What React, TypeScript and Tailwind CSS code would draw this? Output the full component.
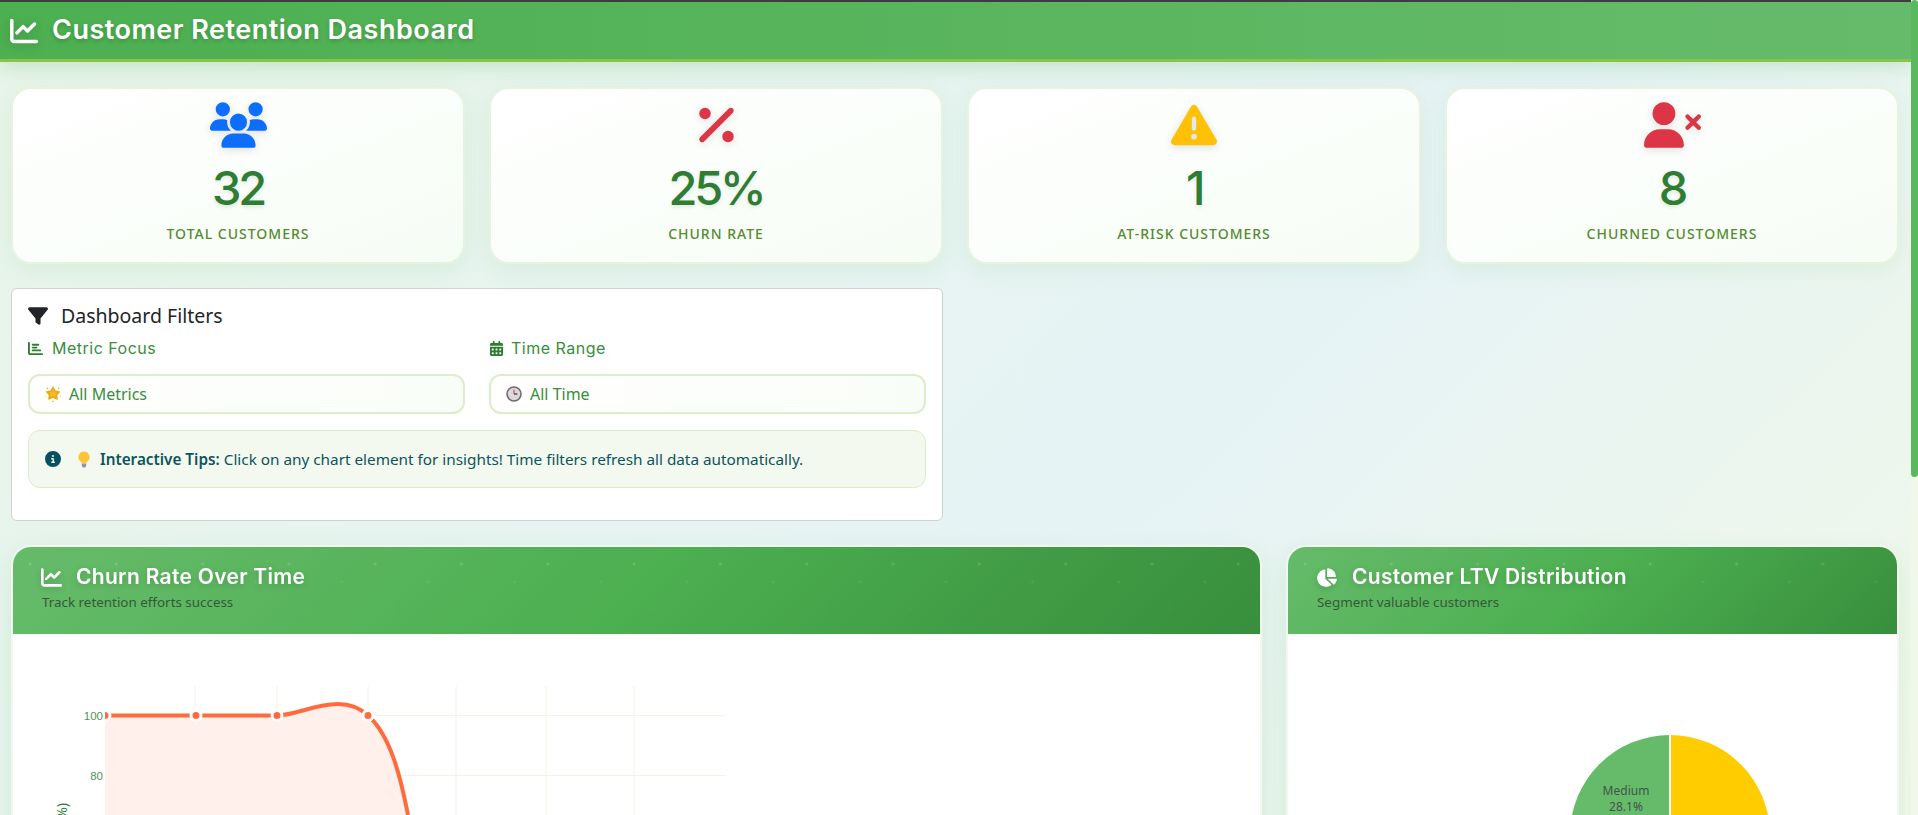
import React from "react";
import { FaChartLine, FaUsers, FaPercent, FaTriangleExclamation, FaUserXmark, FaFilter, FaChartBar, FaCalendarDays, FaCircleInfo, FaChartPie } from "react-icons/fa6";

const display = "[font-family:Inter,Lato,sans-serif]";

function Star() {
  return (
    <svg viewBox="0 0 16 16" className="w-4 h-4 shrink-0 block">
      <path d="M8 2l2.100 3.300 3.900.7-2.700 2.900.6 3.900L8 11l-3.900 1.800.6-3.900L2 6l3.900-.7z" fill="#f5bd2a" stroke="#e9a919" strokeWidth="1.800" strokeLinejoin="round" />
      <circle cx="2.400" cy="2.400" r=".8" fill="#f2b51d" /><circle cx="13.600" cy="2.400" r=".8" fill="#f2b51d" /><circle cx="8" cy=".6" r=".6" fill="#f2b51d" /><circle cx="8" cy="15.300" r=".8" fill="#f2b51d" /><circle cx=".7" cy="10" r=".6" fill="#f2b51d" /><circle cx="15.300" cy="10" r=".6" fill="#f2b51d" />
    </svg>
  );
}
function Clock() {
  return (
    <svg viewBox="0 0 16 16" className="w-4 h-4 shrink-0 block">
      <circle cx="8" cy="8" r="7" fill="#dcd8dc" stroke="#6f6a70" strokeWidth="1.600" />
      <path d="M8 8V3.600" stroke="#c8344c" strokeWidth="1" />
      <path d="M8 8h3.400" stroke="#3a3a3a" strokeWidth="1.200" />
    </svg>
  );
}
function Bulb() {
  return (
    <svg viewBox="0 0 14 17" className="w-[14px] h-[17px] shrink-0 block">
      <path d="M7 .5a5.600 5.600 0 0 0-3.300 10.100c.6.5.9 1 1 1.700h4.600c.1-.7.4-1.200 1-1.700A5.600 5.600 0 0 0 7 .5z" fill="#fcc636" />
      <path d="M4.800 12.500h4.400v2.300l-1 1.700H5.800l-1-1.700z" fill="#9c8bb5" />
    </svg>
  );
}

function Stat({ icon, value, label }: { icon: React.ReactNode; value: string; label: string }) {
  return (
    <div className="h-[177px] rounded-[20px] border-2 border-[#e5f3e0] bg-gradient-to-br from-white to-[#f6fdf5] shadow-[0_6px_22px_rgba(76,175,80,0.1)] flex flex-col items-center pt-[13px]">
      <div className="h-[46px] flex items-center justify-center [filter:drop-shadow(0_2px_4px_rgba(0,0,0,0.12))]">{icon}</div>
      <div className={`mt-[11px] h-[58px] leading-[58px] text-[47px] font-medium tracking-[-0.07em] text-[#2e7d32] [text-shadow:0_2px_4px_rgba(0,0,0,0.1)] ${display}`}>{value}</div>
      <div className='mt-[7px] text-[14px] leading-[20px] font-medium uppercase tracking-[1px] text-[#558b2f] [font-family:"Noto_Sans",sans-serif]'>{label}</div>
    </div>
  );
}

function ChartHeader({ icon, title, sub, iconWidth }: { icon: React.ReactNode; title: string; sub: string; iconWidth: string }) {
  const id = `dots-${title.length}`;
  return (
    <div className="relative h-[87px] bg-[linear-gradient(135deg,#66bb6a_0%,#4caf50_50%,#388e3c_100%)] pl-[28px] pt-[14px] overflow-hidden">
      <svg className="absolute inset-0 w-full h-full">
        <defs>
          <pattern id={id} width="86.300" height="86.300" patternUnits="userSpaceOnUse">
            <circle cx="17" cy="17" r="1.300" fill="#fff" fillOpacity=".16" />
            <circle cx="70" cy="35" r="1" fill="#fff" fillOpacity=".12" />
            <circle cx="35" cy="61" r=".7" fill="#fff" fillOpacity=".1" />
          </pattern>
        </defs>
        <rect width="100%" height="100%" fill={`url(#${id})`} />
      </svg>
      <div className="relative flex items-center h-[32px] text-white [filter:drop-shadow(0_2px_3px_rgba(0,0,0,0.15))]">
        <span className={`text-[21px] flex ${iconWidth}`}>{icon}</span>
        <span className={`text-[21px] font-semibold tracking-[0.3px] ${display}`}>{title}</span>
      </div>
      <div className='relative ml-[1px] -mt-[1px] text-[13.400px] leading-[20px] text-[#345a38] [font-family:"Noto_Sans",sans-serif]'>{sub}</div>
    </div>
  );
}

function LineChart() {
  const v = [182, 264, 355, 443, 533, 621];
  return (
    <svg className="absolute left-0 top-0 w-[800px] h-[181px]" viewBox="0 0 800 181">
      <defs>
        <clipPath id="plot"><rect x="92" y="40" width="620" height="141" /></clipPath>
      </defs>
      {v.map((x) => (<line key={x} x1={x} x2={x} y1="52" y2="181" stroke="#f3f4e6" strokeWidth="1" />))}
      <line x1="92" x2="712" y1="81.500" y2="81.500" stroke="#f3f4e6" />
      <line x1="92" x2="712" y1="141.500" y2="141.500" stroke="#f3f4e6" />
      <g clipPath="url(#plot)">
        <path d="M92 81.500 L264 81.500 C282 81.500 302 70 325 70 C338 70 348 75 355 81.500 C378 102 388 145 395 181 L92 181 Z" fill="#fff0ec" />
        <path d="M92 81.500 L264 81.500 C282 81.500 302 70 325 70 C338 70 348 75 355 81.500 C378 102 388 145 395 181" fill="none" stroke="#ff6b3d" strokeWidth="4" />
        {[92, 183, 264, 355].map((x) => (<circle key={x} cx={x} cy="81.500" r="5" fill="#ff6b3d" stroke="#fff" strokeWidth="3" />))}
      </g>
      <g fontFamily="Liberation Sans, sans-serif" fontSize="11.500" fill="#4f9455">
        <text x="90" y="86" textAnchor="end">100</text>
        <text x="90" y="146" textAnchor="end">80</text>
      </g>
      <text transform="translate(54,169) rotate(-90)" fontFamily="Noto Sans, sans-serif" fontSize="14" fill="#2e7d32" textAnchor="end">Churn Rate (%)</text>
    </svg>
  );
}

export default function App() {
  return (
    <div className="h-[815px] w-full overflow-hidden flex [font-family:'Noto_Sans',sans-serif] bg-[linear-gradient(135deg,#e8f5e9_0%,#e6f3f5_60%,#f1f8e9_100%)]">
      <main className="flex-1 min-w-0 overflow-hidden">
        <header className="h-[62px] border-t-2 border-t-[#3d3d3d] border-b-[3px] border-b-[#8bc34a] bg-gradient-to-r from-[#4caf50] to-[#66bb6a] shadow-[0_4px_20px_rgba(76,175,80,0.25)] flex items-center pl-[10px] text-white">
          <FaChartLine className="text-[28px] mr-[14px] [filter:drop-shadow(0_2px_4px_rgba(0,0,0,0.15))]" />
          <h1 className={`text-[27px] font-semibold tracking-[0.5px] [text-shadow:0_2px_4px_rgba(0,0,0,0.2)] ${display}`}>Customer Retention Dashboard</h1>
        </header>

        <div className="pl-[11px] pr-[12px] pt-[25px]">
          <section className="grid grid-cols-4 gap-[24px]">
            <Stat icon={<FaUsers className="text-[#0d6efd] w-[57px] h-[46px]" />} value="32" label="Total Customers" />
            <Stat icon={<FaPercent className="text-[#dc3545] w-[35px] h-[46px]" />} value="25%" label="Churn Rate" />
            <Stat icon={<FaTriangleExclamation className="text-[#ffc107] w-[46px] h-[46px]" />} value="1" label="At-Risk Customers" />
            <Stat icon={<FaUserXmark className="text-[#dc3545] w-[57px] h-[46px]" />} value="8" label="Churned Customers" />
          </section>

          <section className="mt-[24px] w-[932px] h-[233px] rounded-[6px] border border-[#cfd3d1] bg-white pl-[16px] pr-[16px] pt-[16px] text-[#212529]">
            <div className="flex items-center h-[22px]">
              <FaFilter className="text-[20px] w-[20px] mr-[13px]" />
              <span className="text-[19.500px] leading-[22px]">Dashboard Filters</span>
            </div>
            <div className="grid grid-cols-2 gap-x-[24px] mt-[9px]">
              {[
                { i: <FaChartBar />, w: "w-[24px]", l: "Metric Focus", e: <Star />, t: "All Metrics" },
                { i: <FaCalendarDays />, w: "w-[22px]", l: "Time Range", e: <Clock />, t: "All Time" },
              ].map((f) => (
                <div key={f.l}>
                  <div className={`flex items-center h-[24px] text-[#388e3c] text-[16px] tracking-[0.5px] ${display}`}>
                    <span className={`text-[15px] flex text-[#2e7d32] ${f.w}`}>{f.i}</span>
                    <span>{f.l}</span>
                  </div>
                  <div className="mt-[14px] h-[40px] rounded-[12px] border-2 border-[#dcedc8] bg-gradient-to-r from-white to-[#f9fdf7] flex items-center pl-[15px] text-[16px] text-[#388e3c]">
                    <span className="mr-[8px]">{f.e}</span>{f.t}
                  </div>
                </div>
              ))}
            </div>
            <div className="mt-[16px] h-[58px] rounded-[12px] border border-[#dcedc8] bg-[#f3f9ee] flex items-center pl-[16px] text-[15.300px] text-[#0c5460]">
              <FaCircleInfo className="text-[16px] text-[#055160] mr-[16px]" />
              <span className="mr-[9px]"><Bulb /></span>
              <span><b className="font-semibold">Interactive Tips:</b> Click on any chart element for insights! Time filters refresh all data automatically.</span>
            </div>
          </section>

          <section className="mt-[24px] grid grid-cols-[1251px_613px] gap-[24px]">
            <div className="h-[400px] rounded-t-[20px] border-2 border-[#f1f8ef] bg-white overflow-hidden shadow-[0_8px_24px_rgba(76,175,80,0.14)]">
              <ChartHeader icon={<FaChartLine />} iconWidth="w-[35px]" title="Churn Rate Over Time" sub="Track retention efforts success" />
              <div className="relative h-[300px]"><LineChart /></div>
            </div>
            <div className="h-[400px] rounded-t-[20px] border-2 border-[#f1f8ef] bg-white overflow-hidden shadow-[0_8px_24px_rgba(76,175,80,0.14)]">
              <ChartHeader icon={<FaChartPie />} iconWidth="w-[36px]" title="Customer LTV Distribution" sub="Segment valuable customers" />
              <div className="relative h-[300px]">
                <svg className="absolute left-0 top-0 w-[609px] h-[181px]" viewBox="0 0 609 181">
                  <path d="M382 201 L382 101 A100 100 0 0 1 382 301 Z" fill="#ffcc00" />
                  <path d="M382 201 L382 101 A100 100 0 0 0 382 301 Z" fill="#66bb6a" />
                  <line x1="382" x2="382" y1="100" y2="181" stroke="#fff" strokeWidth="2" />
                  <g fontFamily="Noto Sans, sans-serif" fontSize="12" fill="#44544a" textAnchor="middle">
                    <text x="338" y="161">Medium</text>
                    <text x="338" y="177">28.1%</text>
                  </g>
                </svg>
              </div>
            </div>
          </section>
        </div>
      </main>
      <aside className="w-[7px] shrink-0 h-full bg-[#f1f8e9]">
        <div className="h-[477px] bg-[#5cb85f] rounded-[4px]" />
      </aside>
    </div>
  );
}
